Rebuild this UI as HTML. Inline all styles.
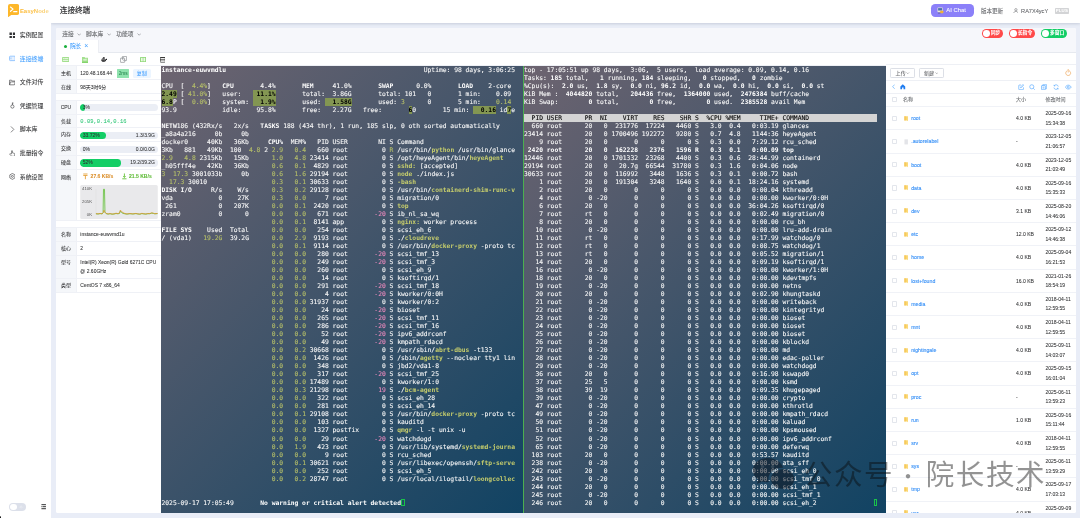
<!DOCTYPE html>
<html lang="zh-CN">
<head>
<meta charset="utf-8">
<title>EasyNode - 连接终端</title>
<style>
*{box-sizing:border-box;margin:0;padding:0}
html,body{width:1080px;height:518px;overflow:hidden}
body{position:relative;background:#e9edf7;font-family:"Liberation Sans","Noto Sans CJK SC",sans-serif;color:#303133;-webkit-font-smoothing:antialiased;-webkit-text-stroke:.06px}
.abs{position:absolute}
#wrap{position:absolute;left:0;top:0;width:1080px;height:518px;overflow:hidden;will-change:transform}
/* sidebar */
#side{position:absolute;left:0;top:0;width:51px;height:518px;background:#fff;z-index:3}
#logo{position:absolute;left:7.9px;top:3.9px;width:11.1px;height:13.3px}
#logot{position:absolute;left:19.900px;top:6.800px;font-size:6px;line-height:8px;font-weight:700;color:#fcc247;letter-spacing:-.02px;background:linear-gradient(90deg,#fcb322 0%,#fcc044 50%,#f8d88e 100%);-webkit-background-clip:text;background-clip:text;-webkit-text-fill-color:transparent;-webkit-text-stroke:0}
.mi{position:absolute;left:0;width:51.5px;height:12px;font-size:5.9px;line-height:12px;color:#303133}
.mi span{position:absolute;left:19.8px;top:0;white-space:nowrap}
.mi svg{position:absolute;left:8.6px;top:2.6px;width:6.8px;height:6.8px}
.mi.act{color:#409eff}
/* header */
#head{position:absolute;left:51px;top:0;width:1029px;height:23px;background:#fff;box-shadow:0 .8px 3px rgba(70,80,110,.27)}
#title{position:absolute;left:8.8px;top:5px;font-size:7.6px;line-height:11px;font-weight:500;color:#303133;white-space:nowrap}
#aichat{position:absolute;left:880.1px;top:3.9px;width:42.6px;height:13.1px;border-radius:4.2px;background:#8b80f9;color:#fff;font-size:5.9px;line-height:13.9px;white-space:nowrap}
#aichat span{position:absolute;left:15.2px;top:0}
#ver{position:absolute;left:930.1px;top:4.6px;font-size:5.5px;line-height:12px;color:#606266;white-space:nowrap}
#user{position:absolute;left:970.1px;top:4.6px;font-size:5.6px;line-height:12px;color:#606266;white-space:nowrap}
#plus{position:absolute;left:1003.7px;top:7.5px;width:14.4px;height:6.4px;background:#d3d4d6;border-radius:.8px;color:#fff;font-size:4.4px;line-height:6.4px;text-align:center;font-weight:700;letter-spacing:.1px}
/* panel */
#panel{position:absolute;left:56px;top:27.7px;width:1020px;height:485.3px;background:#fff;border-radius:2px;overflow:hidden}
#menurow{position:absolute;left:0;top:0;width:1020px;height:12.5px;background:#f6f7fb;font-size:5.75px;line-height:12.5px;color:#606266}
#menurow span{position:absolute;top:0;white-space:nowrap}
#tabrow{position:absolute;left:0;top:12.5px;width:1020px;height:12.7px;background:#f6f7fb;border-bottom:.5px solid #e6e9ef}
#tab{position:absolute;left:0;top:0;width:43px;height:12.7px;background:#fff;border-right:.5px solid #eceef3;font-size:5.7px;line-height:12.4px;color:#409eff}
#toolrow{position:absolute;left:0;top:24.9px;width:1020px;height:13.2px;background:#fff;border-bottom:.5px solid #eef0f5}
#toolrow svg{position:absolute}
.sw{position:absolute;top:1.6px;height:8.8px;border-radius:4.4px;color:#fff;font-size:4.8px;line-height:8.8px;font-weight:700;white-space:nowrap}
.sw i{position:absolute;left:1px;top:1px;width:6.8px;height:6.8px;border-radius:50%;background:#fff}
.sw span{position:absolute;left:8.6px;top:0}
/* info */
#info{position:absolute;left:0;top:37.8px;width:105px;height:447.5px;background:#fff;font-size:4.98px;color:#303133}
.ir{position:absolute;left:0;width:105px;border-top:.5px solid #eff1f6}
.ir .k{position:absolute;left:0;top:0;bottom:0;width:20.8px;background:#f5f7fa;border-right:.5px solid #eff1f6;text-align:center;color:#303133}
.ir .v{position:absolute;left:24.3px;top:0;white-space:nowrap}
.bar{position:absolute;left:24.2px;width:77.8px;height:7.4px;border-radius:3.7px;background:#ebeef5;overflow:hidden}
.bar b{position:absolute;left:0;top:0;height:100%;background:#13ce66;border-radius:3.7px}
.bar span{position:absolute;top:0;line-height:7.4px;font-size:5px;color:#303133;white-space:nowrap}
/* terminals */
.term{position:absolute;top:38.1px;height:447.2px;background:linear-gradient(135deg,#6d6470 0%,#114363 100%);overflow:hidden;
 font-family:"DejaVu Sans Mono","Liberation Mono",monospace;font-size:6.32px;color:#fafafa;-webkit-text-stroke:.09px}
.term .l{height:8.02px;line-height:8.8px;padding-left:.5px;white-space:pre;overflow:hidden}
.term.t2 .l{padding-left:0}
.term .o{color:#b7c069}
.term .ob{color:#c6cd6c;font-weight:700;-webkit-text-stroke:0}
.term .p{color:#f08cc0}
.term .b{font-weight:700;color:#fff;-webkit-text-stroke:0}
.term .h{background:#839652;color:#000;font-weight:700;-webkit-text-stroke:0;display:inline-block;height:8.02px;vertical-align:top}
.term .inv{background:#d4d4d4;color:#000;display:inline-block;height:8.02px;vertical-align:top}
.term .cur{display:inline-block;height:7.4px;width:3.8px;vertical-align:top;margin-top:.3px;border:.6px solid #19c24a}
/* file panel */
#files{position:absolute;left:830px;top:36.8px;width:190px;height:448.5px;background:#fff;border-top:1px solid #eef0f5;font-size:5.06px;color:#303133;overflow:hidden}
.fbtn{position:absolute;top:2.8px;height:9.5px;border:.5px solid #dcdfe6;border-radius:1.2px;background:#fff;font-size:5.06px;line-height:8.6px;color:#606266;text-align:center;white-space:nowrap}
.hl{position:absolute;left:0;width:190px;height:.5px;background:#eef0f5}
.cb{position:absolute;left:5.6px;top:8.6px;width:5.2px;height:5.2px;border:.5px solid #e3e6ec;border-radius:.9px;background:#fff}
.fr{position:absolute;left:0;width:190px;height:23.2px;border-top:.5px solid #f0f2f7}
.fr .fi{position:absolute;left:18px;top:8.3px;width:4.6px;height:5.8px}
.fr .fn{position:absolute;left:25.2px;top:0;line-height:23.4px;color:#3a92f7;font-size:5.2px;white-space:nowrap;-webkit-text-stroke:.12px #3a92f7}
.fr .fs{position:absolute;left:130px;top:0;line-height:23.4px;color:#303133;white-space:nowrap}
.fr .fd{position:absolute;left:159.4px;top:1.9px;line-height:9.6px;color:#303133;white-space:nowrap}
#wm{-webkit-text-stroke:0;position:absolute;left:0;top:453.4px;height:40px;width:1080px;font-size:28.6px;line-height:40px;color:rgba(10,10,10,.44);font-family:"Noto Sans CJK SC","Liberation Sans",sans-serif;letter-spacing:1.5px;z-index:5}
#wm span{position:absolute;top:0;white-space:nowrap}
</style>
</head>
<body>
<div id="wrap">

<!-- ============ sidebar ============ -->
<div id="side">
  <div id="logo"><svg viewBox="0 0 22.200 26.600" width="11.100" height="13.300" style="position:absolute;left:0;top:0"><path d="M4 0h14.200a4 4 0 0 1 4 4v13.800a4 4 0 0 1-4 4H6.500L0 26.600V4a4 4 0 0 1 4-4z" fill="#fdb72a"/><path d="M5 6l5.200 4.300L5 14.600" fill="none" stroke="#fff" stroke-width="2.300" stroke-linecap="round" stroke-linejoin="round"/><path d="M11.400 15.400h6.400" stroke="#fff" stroke-width="2.300" stroke-linecap="round"/></svg></div>
  <div id="logot">EasyNode</div>

  <div class="mi" style="top:29px"><svg viewBox="0 0 14 14"><path d="M1 1h5v5H1zM8 1h5v5H8zM1 8h5v5H1zM8 8h5v5H8z" fill="#303133"/></svg><span>实例配置</span></div>
  <div class="mi act" style="top:52.6px"><svg viewBox="0 0 14 14"><rect x="1" y="2.400" width="11.800" height="9.200" rx="1.800" fill="#e6f1ff" stroke="#5aa7ff" stroke-width="1.200"/><path d="M4 5.200v3.600" stroke="#5aa7ff" stroke-width="1.100"/></svg><span>连接终端</span></div>
  <div class="mi" style="top:76.2px"><svg viewBox="0 0 14 14"><path d="M1.2 12V2.4h4l1.4 1.8h6.2V6M1.2 12l1.8-6h10l-1.8 6z" fill="none" stroke="#303133" stroke-width="1.2" stroke-linejoin="round"/></svg><span>文件对传</span></div>
  <div class="mi" style="top:99.8px"><svg viewBox="0 0 14 14"><circle cx="7" cy="9.4" r="3.3" fill="none" stroke="#303133" stroke-width="1.2"/><path d="M7 6V1.2M7 2h2.2M7 4h1.6" stroke="#303133" stroke-width="1.2" fill="none"/></svg><span>凭据管理</span></div>
  <div class="mi" style="top:123.4px"><svg viewBox="0 0 14 14"><path d="M4.5 1.5l5.5 5.5-5.5 5.5" fill="none" stroke="#303133" stroke-width="1.2" stroke-linecap="round" stroke-linejoin="round"/></svg><span>脚本库</span></div>
  <div class="mi" style="top:147px"><svg viewBox="0 0 14 14"><path d="M5.2 8V2.2a1 1 0 0 1 2 0V6l3.6.8a1.4 1.4 0 0 1 1.1 1.6l-.6 3.4a1.4 1.4 0 0 1-1.4 1.1H6.2a2 2 0 0 1-1.5-.7L1.6 8.8c-.5-.7.4-1.6 1.2-1.1z" fill="none" stroke="#303133" stroke-width="1.1" stroke-linejoin="round"/></svg><span>批量指令</span></div>
  <div class="mi" style="top:170.6px"><svg viewBox="0 0 14 14"><path d="M7 .9l5.3 3v6.2L7 13.100 1.700 10.100V3.900z" fill="none" stroke="#303133" stroke-width="1.2" stroke-linejoin="round"/><circle cx="7" cy="7" r="2" fill="none" stroke="#303133" stroke-width="1.2"/></svg><span>系统设置</span></div>

  <div class="abs" style="left:9.1px;top:502.8px;width:17.2px;height:8.3px;border-radius:4.15px;background:#dce0ea"><div class="abs" style="left:.9px;top:.8px;width:6.7px;height:6.7px;border-radius:50%;background:#fff"></div><svg class="abs" style="left:10.200px;top:2px;width:4.300px;height:4.300px" viewBox="0 0 10 10"><circle cx="5" cy="5" r="2.200" fill="none" stroke="#eef0f6" stroke-width="1.300"/><path d="M5 0v1.500M5 8.500V10M0 5h1.500M8.500 5H10" stroke="#eef0f6" stroke-width="1"/></svg></div><div class="abs" style="left:-1.600px;top:516.400px;width:3px;height:3px;border-radius:50%;background:#111"></div>
  <svg class="abs" style="left:41px;top:504.2px;width:5.4px;height:5.4px" viewBox="0 0 12 12"><path d="M1 1.500h10M1 6h10M1 10.500h10" stroke="#303133" stroke-width="2.2"/><path d="M3.500 3.200v5.600" stroke="#fff" stroke-width="1"/></svg>
</div>

<!-- ============ header ============ -->
<div id="head">
  <div id="title">连接终端</div>
  <div id="aichat"><svg viewBox="0 0 14 14" style="position:absolute;left:6.3px;top:3.2px;width:6.8px;height:6.8px"><rect x="1" y="1" width="11" height="10" rx="1" fill="#e8e4d6"/><rect x="2.300" y="2.300" width="8.400" height="5" fill="#4a6fb0"/><rect x="6.500" y="7.500" width="6.500" height="5.500" rx="1" fill="#f0b23a"/><path d="M2 12.500h5" stroke="#555" stroke-width="1.200"/></svg><span>AI Chat</span></div>
  <div id="ver">版本更新</div>
  <div id="user"><svg viewBox="0 0 12 12" style="position:absolute;left:-8.600px;top:3px;width:5.800px;height:5.800px"><circle cx="6" cy="3.600" r="2.400" fill="none" stroke="#606266" stroke-width="1.100"/><path d="M1.300 11.300c.3-3 2.300-4.300 4.700-4.300s4.400 1.300 4.700 4.300" fill="none" stroke="#606266" stroke-width="1.100"/></svg>RA7X4ycY</div>
  <div id="plus">PLUS</div>
</div>

<!-- ============ main panel ============ -->
<div id="panel">
  <div id="menurow">
    <span style="left:6.3px">连接</span><svg class="abs" style="left:20.700px;top:5px;width:4.400px;height:3px" viewBox="0 0 9 6"><path d="M1 1l3.500 3.500L8 1" fill="none" stroke="#606266" stroke-width="1"/></svg>
    <span style="left:30.100px">脚本库</span><svg class="abs" style="left:50.700px;top:5px;width:4.400px;height:3px" viewBox="0 0 9 6"><path d="M1 1l3.500 3.500L8 1" fill="none" stroke="#606266" stroke-width="1"/></svg>
    <span style="left:60.200px">功能项</span><svg class="abs" style="left:80.700px;top:5px;width:4.400px;height:3px" viewBox="0 0 9 6"><path d="M1 1l3.500 3.500L8 1" fill="none" stroke="#606266" stroke-width="1"/></svg>
    <div class="sw" style="left:926.200px;width:20.600px;background:#ff4949"><i></i><span>同步</span></div>
    <div class="sw" style="left:953.200px;width:26px;background:#ff4949"><i></i><span>长指令</span></div>
    <div class="sw" style="left:985.300px;width:26px;background:#13ce66"><i></i><span>多窗口</span></div>
  </div>
  <div id="tabrow">
    <div id="tab"><i class="abs" style="left:8.100px;top:4.600px;width:3.300px;height:3.300px;border-radius:50%;background:#1aaf3c"></i><span class="abs" style="left:13.900px;top:0;white-space:nowrap">院长</span><span class="abs" style="left:28.300px;top:-.3px;font-size:7px;color:#409eff;-webkit-text-stroke:0">×</span></div>
  </div>
  <div id="toolrow">
    <svg style="left:5.900px;top:4.300px;width:7.100px;height:5px" viewBox="0 0 7.100 5"><rect x="0" y="0" width="7.100" height="5" rx=".8" fill="#a4e08f"/><path d="M1.300 1.600h.7M2.900 1.600h3M1.300 3.400h4.600" stroke="#fff" stroke-width=".75" stroke-linecap="round"/></svg>
    <svg style="left:25.900px;top:4.400px;width:6px;height:5.750px" viewBox="0 0 6 5.750"><path d="M0 0h2.600l.5.800H6V5.750H0z" fill="#a4e08f"/><path d="M0 5.300h6" stroke="#6fcf55" stroke-width=".9"/><path d="M1.300 2.900h3.400" stroke="#fff" stroke-width=".9"/><path d="M3.400 1.900h1.200" stroke="#e8f8e2" stroke-width=".5"/></svg>
    <svg style="left:45px;top:4.200px;width:6.400px;height:5px" viewBox="0 0 12.800 10"><path d="M.3 5.200h8.900c.5-1.700 1.600-2.200 2.900-1.500.4.200.5.500.3.900-.4.900-1 1.400-2 1.500C9.700 8.600 7.700 9.800 5 9.800 2.200 9.800.5 8.300.3 5.200z" fill="#1d1d1f"/><path d="M1.800 2.800h5.800v1.900H1.800zM3.800.7h3.600v1.700H3.800z" fill="#1d1d1f"/><path d="M3 7.400c1.400.9 3.300.9 4.700 0" stroke="#fff" stroke-width=".8" fill="none"/></svg>
    <svg style="left:64px;top:3.400px;width:7px;height:6.750px" viewBox="0 0 14 13.500"><rect x="4.600" y=".8" width="8.600" height="8.400" rx="1" fill="#fff" stroke="#6b6e73" stroke-width="1.100"/><rect x=".8" y="4.300" width="8.600" height="8.400" rx="1" fill="#fff" stroke="#6b6e73" stroke-width="1.100"/><path d="M7.800 3.400A2.600 2.600 0 1 0 9.400 7.400" fill="none" stroke="#6b6e73" stroke-width="1"/></svg>
    <svg style="left:83.900px;top:4.300px;width:6.100px;height:5.100px" viewBox="0 0 6.100 5.100"><rect x="0" y="0" width="6.100" height="5.100" rx=".4" fill="#8fd878"/><rect x=".9" y=".8" width="1.800" height="3.500" fill="#eaf8e4"/><rect x="3.400" y=".8" width="1.800" height="3.500" fill="#eaf8e4"/></svg>
    <svg style="left:103.900px;top:4.300px;width:5.600px;height:5.700px" viewBox="0 0 5.600 5.700"><rect x=".35" y=".35" width="4.900" height="5" rx=".7" fill="#fff" stroke="#444" stroke-width=".7"/><path d="M.3 .6h5M.1 2.850h5.400" stroke="#222" stroke-width=".9"/><path d="M.5 5.300h4.600" stroke="#999" stroke-width=".6"/></svg>
  </div>

  <!-- info column -->
  <div id="info">
    <div class="ir" style="top:0;height:13.900px;line-height:14.700px"><div class="k">主机</div><div class="v">120.48.168.44</div>
      <div class="abs" style="left:61px;top:2.300px;width:12.200px;height:9.500px;background:#8fe2ae;border-radius:.6px;color:#2c8a55;text-align:center;line-height:9.500px;font-size:4.700px">2ms</div>
      <div class="abs" style="left:77px;top:3px;width:17.600px;height:8.200px;background:#ecf5ff;border-radius:1.600px;color:#409eff;text-align:center;line-height:8.200px;font-size:5px">复制</div></div>
    <div class="ir" style="top:13.900px;height:14.400px;line-height:14.700px;border-bottom:.5px solid #eff1f6"><div class="k">在线</div><div class="v">98天3时6分</div></div>

    <div class="ir" style="top:34.400px;height:13.700px;line-height:13.700px"><div class="k">CPU</div><div class="bar" style="top:3.200px"><b style="width:4.400px"></b><span style="left:2.600px">3%</span></div></div>
    <div class="ir" style="top:48.100px;height:13.900px;line-height:13.900px"><div class="k">负载</div><div class="v" style="font-family:'Liberation Mono','DejaVu Sans Mono',monospace;color:#33c779;font-size:5.500px">0.09,0.14,0.16</div></div>
    <div class="ir" style="top:62px;height:13.800px;line-height:13.800px"><div class="k">内存</div><div class="bar" style="top:3.300px"><b style="width:26.300px"></b><span style="left:2.600px">33.72%</span><span style="right:3px">1.3/3.9G</span></div></div>
    <div class="ir" style="top:75.800px;height:13.800px;line-height:13.800px"><div class="k">交换</div><div class="bar" style="top:3.300px"><span style="left:2.600px">0%</span><span style="right:3px">0.0/0.0G</span></div></div>
    <div class="ir" style="top:89.600px;height:13.800px;line-height:13.800px"><div class="k">硬盘</div><div class="bar" style="top:3.300px"><b style="width:40.500px"></b><span style="left:2.600px">52%</span><span style="right:3px">19.2/39.2G</span></div></div>
    <div class="ir" style="top:103.400px;height:51.800px;line-height:14.400px;border-bottom:.5px solid #eff1f6"><div class="k" style="line-height:14.400px">网络</div>
      <svg class="abs" style="left:27.200px;top:3.400px;width:4.800px;height:6.800px" viewBox="0 0 9 11"><path d="M.5 1h8M.5 3.800h8M4.500 3.800v7" stroke="#e6a23c" stroke-width="1.700" fill="none"/></svg>
      <span class="abs" style="left:34.600px;top:-.5px;color:#db8f2c;font-size:5.050px;font-weight:700;white-space:nowrap">27.6 KB/s</span>
      <svg class="abs" style="left:65.800px;top:3.400px;width:4.800px;height:6.800px" viewBox="0 0 9 11"><path d="M4.500 0v7M2.300 5l2.200 2.600L6.700 5M.5 10h8" stroke="#67c23a" stroke-width="1.700" fill="none"/></svg>
      <span class="abs" style="left:73.000px;top:-.5px;color:#5cba33;font-size:5.050px;font-weight:700;white-space:nowrap">21.5 KB/s</span>
      <svg class="abs" style="left:24px;top:14.900px;width:78px;height:34.000px" viewBox="0 0 78 34.200">
        <rect x="0" y="0" width="78" height="34.200" rx="1.600" fill="#e9e9eb"/>
        <text x="11.900" y="5.400" font-size="4.300" fill="#555" text-anchor="end" font-family="Liberation Sans,sans-serif">410K</text>
        <text x="11.900" y="18.500" font-size="4.300" fill="#555" text-anchor="end" font-family="Liberation Sans,sans-serif">205K</text>
        <text x="11.900" y="31.300" font-size="4.300" fill="#555" text-anchor="end" font-family="Liberation Sans,sans-serif">0K</text>
        <path d="M15.800 4v25.600" stroke="#dcdcdc" stroke-width=".4"/>
        <polyline fill="none" stroke="#5fbf32" stroke-width=".8" points="15.800,29 18,29.200 20,28.800 22,29.100 23,28 23.400,4.300 24.400,4.300 24.900,27.500 26,28.800 28,29.300 30,28.900 32,29.400 34,29.200 36,28.700 38,29 39.500,28.600 40.300,26.400 41.500,27.600 43,28.600 45,29 47,29.300 50,28.900 53,29.200 56,28.800 58,29.200 60,29.400 62,28.800 64,29.100 66,29.300 68,28.900 70,28.900 72,28.300 73.500,28.600 75,29 77.800,28.800"/>
        <polyline fill="none" stroke="#d9962e" stroke-width=".8" points="15.800,28.800 18,29 20,28.600 22,28.900 23.200,27.600 23.900,25.400 24.600,27 26,28.500 28,29.100 30,28.700 32,29.200 34,29 36,28.400 38,28.800 39.600,28 40.300,25.300 41.200,26.300 43,27.800 45,28.700 47,29.100 50,28.700 53,29 56,28.600 58,29 60,29.200 62,28.500 64,28.900 66,29.100 68,28.700 70,28.700 72,28 73.500,28.400 75,28.800 77.800,28.600"/>
      </svg>
    </div>

    <div class="ir" style="top:161.900px;height:14px;line-height:12.200px"><div class="k">名称</div><div class="v">instance-euwvmd1u</div></div>
    <div class="ir" style="top:175.900px;height:13.800px;line-height:13.200px"><div class="k">核心</div><div class="v">2</div></div>
    <div class="ir" style="top:189.700px;height:23.300px;line-height:9.600px"><div class="k" style="line-height:13.000px">型号</div><div class="v" style="top:1.600px">Intel(R) Xeon(R) Gold 6271C CPU<br>@ 2.60GHz</div></div>
    <div class="ir" style="top:213px;height:14.200px;line-height:12.800px;border-bottom:.5px solid #eff1f6"><div class="k">类型</div><div class="v">CentOS 7 x86_64</div></div>
  </div>

  <!-- terminals -->
  <div class="term" style="left:105px;width:362.400px">
<div class="l"><span class="b">instance-euwvmdlu</span>                                                    Uptime: 98 days, 3:06:25</div>
<div class="l"></div>
<div class="l">CPU  [  <span class="o">4.4%</span>]   <span class="b">CPU</span>       4.4%       <span class="b">MEM</span>     41.0%       <span class="b">SWAP</span>      0.0%       <span class="b">LOAD</span>    2-core </div>
<div class="l"><span class="h">2.49</span> [ <span class="o">41.0%</span>]   user:   <span class="h"> 11.1%</span>       total:  3.86G       total: 101   0       1 min:    0.09 </div>
<div class="l"><span class="h">6.8</span>P [  <span class="o">0.0%</span>]   system: <span class="h">  1.9%</span>       used: <span class="h">  1.58G</span>       used: <span class="o">3</span>      0       5 min:    <span class="o">0.14</span></div>
<div class="l">93.9            idle:    95.8%       free:   2.27G   free:       <span class="h">6</span>0       15 min: <span class="h">  0.16</span> id<span class="h">7</span>e</div>
<div class="l"></div>
<div class="l"><span class="b">NETW</span>186 (432Rx/s   2x/s   <span class="b">TASKS</span> 188 (434 thr), 1 run, 185 slp, 0 oth sorted automatically    </div>
<div class="l">_a8a4a216     0b     0b                                                                      </div>
<div class="l">docker0     40Kb   36Kb     <span class="b">CPU%</span>  MEM%   PID USER        NI S Command                        </div>
<div class="l">3Kb   881   49Kb  100  <span class="o">4.8</span> 2 <span class="o">2.9</span>   <span class="o">0.4</span>   660 root         0 <span class="o">R</span> /usr/bin/<span class="ob">python</span> /usr/bin/glance</div>
<div class="l"><span class="o">2.9</span>   <span class="o">4.8</span> 2315Kb   15Kb      <span class="o">1.0</span>   <span class="o">4.8</span> 23414 root         0 S /opt/heyeAgent/bin/<span class="ob">heyeAgent</span></div>
<div class="l">_h05fff4e   42Kb   36Kb      <span class="o">0.6</span>   <span class="o">0.1</span>  4829 root         0 S <span class="ob">sshd:</span> [accepted]               </div>
<div class="l"><span class="o">3</span>  <span class="o">17.3</span> 3001033b     0b      <span class="o">0.6</span>   <span class="o">1.6</span> 29194 root         0 S <span class="ob">node</span> ./index.js                </div>
<div class="l">  <span class="o">17.3</span> 30010                 <span class="o">0.3</span>   <span class="o">0.1</span> 30633 root         0 S <span class="ob">-bash</span></div>
<div class="l"><span class="b">DISK I/O</span>     R/s    W/s      <span class="o">0.3</span>   <span class="o">0.2</span> 29128 root         0 S /usr/bin/<span class="ob">containerd-shim-runc-v</span></div>
<div class="l">vda            0    27K      <span class="o">0.3</span>   <span class="o">0.0</span>     7 root         0 S migration/0                    </div>
<div class="l"> 261           0   207K      <span class="o">0.0</span>   <span class="o">0.1</span>  2420 root         0 S <span class="ob">top</span></div>
<div class="l">zram0          0      0      <span class="o">0.0</span>   <span class="o">0.0</span>   671 root       <span class="p">-20</span> S ib_nl_sa_wq                    </div>
<div class="l">                             <span class="o">0.0</span>   <span class="o">0.1</span>  8141 app          0 S <span class="ob">nginx:</span> worker process          </div>
<div class="l"><span class="b">FILE SYS</span>    Used  Total      <span class="o">0.0</span>   <span class="o">0.0</span>   254 root         0 S scsi_eh_6                      </div>
<div class="l">/ (vda1)   <span class="o">19.2G</span>  39.2G      <span class="o">0.0</span>   <span class="o">2.9</span>  9193 root         0 S ./<span class="ob">cloudreve</span></div>
<div class="l">                             <span class="o">0.0</span>   <span class="o">0.1</span>  9114 root         0 S /usr/bin/<span class="ob">docker-proxy</span> -proto tc</div>
<div class="l">                             <span class="o">0.0</span>   <span class="o">0.0</span>   280 root       <span class="p">-20</span> S scsi_tmf_13                    </div>
<div class="l">                             <span class="o">0.0</span>   <span class="o">0.0</span>   249 root       <span class="p">-20</span> S scsi_tmf_3                     </div>
<div class="l">                             <span class="o">0.0</span>   <span class="o">0.0</span>   260 root         0 S scsi_eh_9                      </div>
<div class="l">                             <span class="o">0.0</span>   <span class="o">0.0</span>    14 root         0 S ksoftirqd/1                    </div>
<div class="l">                             <span class="o">0.0</span>   <span class="o">0.0</span>   291 root       <span class="p">-20</span> S scsi_tmf_18                    </div>
<div class="l">                             <span class="o">0.0</span>   <span class="o">0.0</span>     4 root       <span class="p">-20</span> S kworker/0:0H                   </div>
<div class="l">                             <span class="o">0.0</span>   <span class="o">0.0</span> 31937 root         0 S kworker/0:2                    </div>
<div class="l">                             <span class="o">0.0</span>   <span class="o">0.0</span>    24 root       <span class="p">-20</span> S bioset                         </div>
<div class="l">                             <span class="o">0.0</span>   <span class="o">0.0</span>   265 root       <span class="p">-20</span> S scsi_tmf_11                    </div>
<div class="l">                             <span class="o">0.0</span>   <span class="o">0.0</span>   286 root       <span class="p">-20</span> S scsi_tmf_16                    </div>
<div class="l">                             <span class="o">0.0</span>   <span class="o">0.0</span>    52 root       <span class="p">-20</span> S ipv6_addrconf                  </div>
<div class="l">                             <span class="o">0.0</span>   <span class="o">0.0</span>    49 root       <span class="p">-20</span> S kmpath_rdacd                   </div>
<div class="l">                             <span class="o">0.0</span>   <span class="o">0.2</span> 30668 root         0 S /usr/sbin/<span class="ob">abrt-dbus</span> -t133      </div>
<div class="l">                             <span class="o">0.0</span>   <span class="o">0.0</span>  1426 root         0 S /sbin/<span class="ob">agetty</span> --noclear tty1 lin</div>
<div class="l">                             <span class="o">0.0</span>   <span class="o">0.0</span>   348 root         0 S jbd2/vda1-8                    </div>
<div class="l">                             <span class="o">0.0</span>   <span class="o">0.0</span>   317 root       <span class="p">-20</span> S scsi_tmf_25                    </div>
<div class="l">                             <span class="o">0.0</span>   <span class="o">0.0</span> 17489 root         0 S kworker/1:0                    </div>
<div class="l">                             <span class="o">0.0</span>   <span class="o">0.3</span> 21298 root        <span class="p">19</span> S ./<span class="ob">bcm-agent</span></div>
<div class="l">                             <span class="o">0.0</span>   <span class="o">0.0</span>   322 root         0 S scsi_eh_28                     </div>
<div class="l">                             <span class="o">0.0</span>   <span class="o">0.0</span>   281 root         0 S scsi_eh_14                     </div>
<div class="l">                             <span class="o">0.0</span>   <span class="o">0.1</span> 29108 root         0 S /usr/bin/<span class="ob">docker-proxy</span> -proto tc</div>
<div class="l">                             <span class="o">0.0</span>   <span class="o">0.0</span>   103 root         0 S kauditd                        </div>
<div class="l">                             <span class="o">0.0</span>   <span class="o">0.0</span>  1327 postfix      0 S <span class="ob">qmgr</span> -l -t unix -u             </div>
<div class="l">                             <span class="o">0.0</span>   <span class="o">0.0</span>    29 root       <span class="p">-20</span> S watchdogd                      </div>
<div class="l">                             <span class="o">0.0</span>   <span class="o">1.9</span>   423 root         0 S /usr/lib/systemd/<span class="ob">systemd-journa</span></div>
<div class="l">                             <span class="o">0.0</span>   <span class="o">0.0</span>     9 root         0 S rcu_sched                      </div>
<div class="l">                             <span class="o">0.0</span>   <span class="o">0.1</span> 30621 root         0 S /usr/libexec/openssh/<span class="ob">sftp-serve</span></div>
<div class="l">                             <span class="o">0.0</span>   <span class="o">0.0</span>   252 root         0 S scsi_eh_5                      </div>
<div class="l">                             <span class="o">0.0</span>   <span class="o">0.2</span> 28747 root         0 S /usr/local/ilogtail/<span class="ob">loongcollec</span></div>
<div class="l"></div>
<div class="l"></div>
<div class="l">2025-09-17 17:05:49       <span class="b">No warning or critical alert detected</span><span class="cur"> </span></div>
  </div>
  <div class="abs" style="left:467.200px;top:38.100px;width:.9px;height:447.200px;background:#4caf50"></div>
  <div class="term t2" style="left:468px;width:361.700px">
<div class="l">top - 17:05:51 up 98 days,  3:06,  5 users,  load average: 0.09, 0.14, 0.16</div>
<div class="l">Tasks: <span class="b">185</span> total, <span class="b">  1</span> running, <span class="b">184</span> sleeping, <span class="b">  0</span> stopped, <span class="b">  0</span> zombie</div>
<div class="l">%Cpu(s): <span class="b"> 2.0</span> us, <span class="b"> 1.8</span> sy, <span class="b"> 0.0</span> ni, <span class="b">96.2</span> id, <span class="b"> 0.0</span> wa, <span class="b"> 0.0</span> hi, <span class="b"> 0.0</span> si, <span class="b"> 0.0</span> st</div>
<div class="l">KiB Mem :  <span class="b">4044820</span> total,   <span class="b">204436</span> free,  <span class="b">1364000</span> used,  <span class="b">2476384</span> buff/cache</div>
<div class="l">KiB Swap: <span class="b">       0</span> total, <span class="b">       0</span> free, <span class="b">       0</span> used.  <span class="b">2385528</span> avail Mem</div>
<div class="l"></div>
<div class="l"><span class="inv">  PID USER      PR  NI    VIRT    RES    SHR S  %CPU %MEM     TIME+ COMMAND                  </span></div>
<div class="l">  660 root      20   0  231776  17224   4460 S   3.0  0.4   0:03.19 glances</div>
<div class="l">23414 root      20   0 1700496 192272   9280 S   0.7  4.8   1144:36 heyeAgent</div>
<div class="l">    9 root      20   0       0      0      0 S   0.3  0.0   7:29.12 rcu_sched</div>
<div class="l"><span class="b"> 2420 root      20   0  162228   2376   1596 R   0.3  0.1   0:00.09 top</span></div>
<div class="l">12446 root      20   0 1701332  23268   4400 S   0.3  0.6  28:44.99 containerd</div>
<div class="l">29194 root      20   0   20.7g  66544  31780 S   0.3  1.6   0:04.06 node</div>
<div class="l">30633 root      20   0  116992   3448   1636 S   0.3  0.1   0:00.72 bash</div>
<div class="l">    1 root      20   0  191304   3248   1640 S   0.0  0.1  18:24.16 systemd</div>
<div class="l">    2 root      20   0       0      0      0 S   0.0  0.0   0:00.04 kthreadd</div>
<div class="l">    4 root       0 -20       0      0      0 S   0.0  0.0   0:00.00 kworker/0:0H</div>
<div class="l">    6 root      20   0       0      0      0 S   0.0  0.0  36:04.26 ksoftirqd/0</div>
<div class="l">    7 root      rt   0       0      0      0 S   0.0  0.0   0:02.49 migration/0</div>
<div class="l">    8 root      20   0       0      0      0 S   0.0  0.0   0:00.00 rcu_bh</div>
<div class="l">   10 root       0 -20       0      0      0 S   0.0  0.0   0:00.00 lru-add-drain</div>
<div class="l">   11 root      rt   0       0      0      0 S   0.0  0.0   0:17.99 watchdog/0</div>
<div class="l">   12 root      rt   0       0      0      0 S   0.0  0.0   0:08.75 watchdog/1</div>
<div class="l">   13 root      rt   0       0      0      0 S   0.0  0.0   0:05.52 migration/1</div>
<div class="l">   14 root      20   0       0      0      0 S   0.0  0.0   0:09.19 ksoftirqd/1</div>
<div class="l">   16 root       0 -20       0      0      0 S   0.0  0.0   0:00.00 kworker/1:0H</div>
<div class="l">   18 root      20   0       0      0      0 S   0.0  0.0   0:00.00 kdevtmpfs</div>
<div class="l">   19 root       0 -20       0      0      0 S   0.0  0.0   0:00.00 netns</div>
<div class="l">   20 root      20   0       0      0      0 S   0.0  0.0   0:02.90 khungtaskd</div>
<div class="l">   21 root       0 -20       0      0      0 S   0.0  0.0   0:00.00 writeback</div>
<div class="l">   22 root       0 -20       0      0      0 S   0.0  0.0   0:00.00 kintegrityd</div>
<div class="l">   23 root       0 -20       0      0      0 S   0.0  0.0   0:00.00 bioset</div>
<div class="l">   24 root       0 -20       0      0      0 S   0.0  0.0   0:00.00 bioset</div>
<div class="l">   25 root       0 -20       0      0      0 S   0.0  0.0   0:00.00 bioset</div>
<div class="l">   26 root       0 -20       0      0      0 S   0.0  0.0   0:00.00 kblockd</div>
<div class="l">   27 root       0 -20       0      0      0 S   0.0  0.0   0:00.00 md</div>
<div class="l">   28 root       0 -20       0      0      0 S   0.0  0.0   0:00.00 edac-poller</div>
<div class="l">   29 root       0 -20       0      0      0 S   0.0  0.0   0:00.00 watchdogd</div>
<div class="l">   36 root      20   0       0      0      0 S   0.0  0.0   0:16.98 kswapd0</div>
<div class="l">   37 root      25   5       0      0      0 S   0.0  0.0   0:00.00 ksmd</div>
<div class="l">   38 root      39  19       0      0      0 S   0.0  0.0   0:09.35 khugepaged</div>
<div class="l">   39 root       0 -20       0      0      0 S   0.0  0.0   0:00.00 crypto</div>
<div class="l">   47 root       0 -20       0      0      0 S   0.0  0.0   0:00.00 kthrotld</div>
<div class="l">   49 root       0 -20       0      0      0 S   0.0  0.0   0:00.00 kmpath_rdacd</div>
<div class="l">   50 root       0 -20       0      0      0 S   0.0  0.0   0:00.00 kaluad</div>
<div class="l">   51 root       0 -20       0      0      0 S   0.0  0.0   0:00.00 kpsmoused</div>
<div class="l">   52 root       0 -20       0      0      0 S   0.0  0.0   0:00.00 ipv6_addrconf</div>
<div class="l">   65 root       0 -20       0      0      0 S   0.0  0.0   0:00.00 deferwq</div>
<div class="l">  103 root      20   0       0      0      0 S   0.0  0.0   0:53.57 kauditd</div>
<div class="l">  238 root       0 -20       0      0      0 S   0.0  0.0   0:00.00 ata_sff</div>
<div class="l">  242 root      20   0       0      0      0 S   0.0  0.0   0:00.00 scsi_eh_0</div>
<div class="l">  243 root       0 -20       0      0      0 S   0.0  0.0   0:00.00 scsi_tmf_0</div>
<div class="l">  244 root      20   0       0      0      0 S   0.0  0.0   0:00.00 scsi_eh_1</div>
<div class="l">  245 root       0 -20       0      0      0 S   0.0  0.0   0:00.00 scsi_tmf_1</div>
<div class="l">  246 root      20   0       0      0      0 S   0.0  0.0   0:00.00 scsi_eh_2               <span class="cur"> </span></div>
  </div>

  <!-- file panel -->
  <div id="files">
    <div class="fbtn" style="left:4.200px;width:25px">上传<svg style="display:inline-block;width:3.600px;height:2.400px;margin-left:.5px;vertical-align:.6px" viewBox="0 0 9 6"><path d="M1 1l3.500 3.500L8 1" fill="none" stroke="#606266" stroke-width="1"/></svg></div>
    <div class="fbtn" style="left:32.500px;width:25.200px">新建<svg style="display:inline-block;width:3.600px;height:2.400px;margin-left:.5px;vertical-align:.6px" viewBox="0 0 9 6"><path d="M1 1l3.500 3.500L8 1" fill="none" stroke="#606266" stroke-width="1"/></svg></div>
    <svg class="abs" style="left:179.200px;top:3.800px;width:6.400px;height:6.600px" viewBox="0 0 12.800 13.200"><path d="M4 3.600A5 5 0 1 0 8.800 3.600" fill="none" stroke="#eea65a" stroke-width="1.400" stroke-linecap="round"/><path d="M6.400 .8v5.400" stroke="#eea65a" stroke-width="1.400" stroke-linecap="round"/></svg>
    <div class="hl" style="top:14.800px"></div>
    <svg class="abs" style="left:5.600px;top:19.000px;width:3.200px;height:5.400px" viewBox="0 0 6 10"><path d="M5 1L1.200 5 5 9" fill="none" stroke="#409eff" stroke-width="1.100"/></svg>
    <svg class="abs" style="left:14.300px;top:18.900px;width:5.600px;height:5.600px" viewBox="0 0 12 12"><path d="M6 .8L.8 5.600V11.200h3.700V7.600h3v3.600h3.700V5.600z" fill="#1f7cf0"/></svg>
    <svg class="abs" style="left:131.800px;top:18.700px;width:6.200px;height:6.200px" viewBox="0 0 12 12"><path d="M10.500 6.500v3.500a1 1 0 0 1-1 1h-7a1 1 0 0 1-1-1v-7a1 1 0 0 1 1-1H6" fill="none" stroke="#409eff" stroke-width="1.100"/><path d="M5 7.200l.3-1.800L10 .8l1.300 1.300L6.700 6.800z" fill="none" stroke="#409eff" stroke-width="1"/></svg>
    <svg class="abs" style="left:143.300px;top:18.700px;width:6.200px;height:6.200px" viewBox="0 0 12 12"><circle cx="5.400" cy="5.400" r="4" fill="none" stroke="#409eff" stroke-width="1.100"/><path d="M8.400 8.400l2.800 2.800" stroke="#409eff" stroke-width="1.100"/></svg>
    <svg class="abs" style="left:155.300px;top:18.700px;width:6.200px;height:6.200px" viewBox="0 0 12 12"><rect x="1" y="3" width="7.500" height="8" rx=".8" fill="none" stroke="#409eff" stroke-width="1.100"/><path d="M3.500 3V1.200h7.300v8H8.600M3 6h3.500M3 8h3.500" fill="none" stroke="#409eff" stroke-width="1"/></svg>
    <svg class="abs" style="left:167.200px;top:18.700px;width:6.200px;height:6.200px" viewBox="0 0 12 12"><path d="M10.300 5A4.400 4.400 0 0 0 2.300 3.600M1.700 7A4.400 4.400 0 0 0 9.700 8.400" fill="none" stroke="#409eff" stroke-width="1.100"/><path d="M2 1.500v2.300h2.300M10 10.500V8.200H7.700" fill="none" stroke="#409eff" stroke-width="1"/></svg>
    <svg class="abs" style="left:179.000px;top:18.700px;width:6.600px;height:6.200px" viewBox="0 0 13 12"><path d="M.8 6C2.300 3.300 4.200 2.200 6.500 2.200S10.700 3.300 12.200 6C10.700 8.700 8.800 9.800 6.500 9.800S2.300 8.700.8 6z" fill="none" stroke="#409eff" stroke-width="1.100"/><circle cx="6.500" cy="6" r="1.900" fill="none" stroke="#409eff" stroke-width="1.100"/></svg>
    <div class="hl" style="top:27.600px"></div>
    <span class="cb" style="top:31.600px"></span>
    <span class="abs" style="left:17px;top:27.900px;line-height:13px;color:#5f6266;white-space:nowrap">名称</span>
    <span class="abs" style="left:130px;top:27.900px;line-height:13px;color:#5f6266;white-space:nowrap">大小</span>
    <span class="abs" style="left:159.400px;top:27.900px;line-height:13px;color:#5f6266;white-space:nowrap">修改时间</span>
<div class="fr" style="top:40.80px"><span class="cb"></span><svg class="fi" viewBox="0 0 10 12"><path d="M1 0.5h7.5v10.5l-2-1.6H1z" fill="#fad56e"/><path d="M1 0.5h2.2v9H1z" fill="#f2be48"/></svg><span class="fn">root</span><span class="fs">4.0 KB</span><span class="fd">2025-09-16<br>15:34:38</span></div>
<div class="fr" style="top:64.00px"><span class="cb"></span><svg class="fi" viewBox="0 0 10 12"><rect x="1" y="0.5" width="7.5" height="11" fill="#e3e4e8"/></svg><span class="fn">.autorelabel</span><span class="fs">-</span><span class="fd">2023-12-05<br>21:06:57</span></div>
<div class="fr" style="top:87.20px"><span class="cb"></span><svg class="fi" viewBox="0 0 10 12"><path d="M1 0.5h7.5v10.5l-2-1.6H1z" fill="#fad56e"/><path d="M1 0.5h2.2v9H1z" fill="#f2be48"/></svg><span class="fn">boot</span><span class="fs">4.0 KB</span><span class="fd">2023-12-05<br>21:03:49</span></div>
<div class="fr" style="top:110.40px"><span class="cb"></span><svg class="fi" viewBox="0 0 10 12"><path d="M1 0.5h7.5v10.5l-2-1.6H1z" fill="#fad56e"/><path d="M1 0.5h2.2v9H1z" fill="#f2be48"/></svg><span class="fn">data</span><span class="fs">4.0 KB</span><span class="fd">2025-09-16<br>15:35:33</span></div>
<div class="fr" style="top:133.60px"><span class="cb"></span><svg class="fi" viewBox="0 0 10 12"><path d="M1 0.5h7.5v10.5l-2-1.6H1z" fill="#fad56e"/><path d="M1 0.5h2.2v9H1z" fill="#f2be48"/></svg><span class="fn">dev</span><span class="fs">3.1 KB</span><span class="fd">2025-08-20<br>14:46:06</span></div>
<div class="fr" style="top:156.80px"><span class="cb"></span><svg class="fi" viewBox="0 0 10 12"><path d="M1 0.5h7.5v10.5l-2-1.6H1z" fill="#fad56e"/><path d="M1 0.5h2.2v9H1z" fill="#f2be48"/></svg><span class="fn">etc</span><span class="fs">12.0 KB</span><span class="fd">2025-09-12<br>14:46:38</span></div>
<div class="fr" style="top:180.00px"><span class="cb"></span><svg class="fi" viewBox="0 0 10 12"><path d="M1 0.5h7.5v10.5l-2-1.6H1z" fill="#fad56e"/><path d="M1 0.5h2.2v9H1z" fill="#f2be48"/></svg><span class="fn">home</span><span class="fs">4.0 KB</span><span class="fd">2025-09-04<br>16:21:53</span></div>
<div class="fr" style="top:203.20px"><span class="cb"></span><svg class="fi" viewBox="0 0 10 12"><path d="M1 0.5h7.5v10.5l-2-1.6H1z" fill="#fad56e"/><path d="M1 0.5h2.2v9H1z" fill="#f2be48"/></svg><span class="fn">lost+found</span><span class="fs">16.0 KB</span><span class="fd">2021-01-26<br>18:54:19</span></div>
<div class="fr" style="top:226.40px"><span class="cb"></span><svg class="fi" viewBox="0 0 10 12"><path d="M1 0.5h7.5v10.5l-2-1.6H1z" fill="#fad56e"/><path d="M1 0.5h2.2v9H1z" fill="#f2be48"/></svg><span class="fn">media</span><span class="fs">4.0 KB</span><span class="fd">2018-04-11<br>12:59:55</span></div>
<div class="fr" style="top:249.60px"><span class="cb"></span><svg class="fi" viewBox="0 0 10 12"><path d="M1 0.5h7.5v10.5l-2-1.6H1z" fill="#fad56e"/><path d="M1 0.5h2.2v9H1z" fill="#f2be48"/></svg><span class="fn">mnt</span><span class="fs">4.0 KB</span><span class="fd">2018-04-11<br>12:59:55</span></div>
<div class="fr" style="top:272.80px"><span class="cb"></span><svg class="fi" viewBox="0 0 10 12"><path d="M1 0.5h7.5v10.5l-2-1.6H1z" fill="#fad56e"/><path d="M1 0.5h2.2v9H1z" fill="#f2be48"/></svg><span class="fn">nightingale</span><span class="fs">4.0 KB</span><span class="fd">2025-09-11<br>14:03:07</span></div>
<div class="fr" style="top:296.00px"><span class="cb"></span><svg class="fi" viewBox="0 0 10 12"><path d="M1 0.5h7.5v10.5l-2-1.6H1z" fill="#fad56e"/><path d="M1 0.5h2.2v9H1z" fill="#f2be48"/></svg><span class="fn">opt</span><span class="fs">4.0 KB</span><span class="fd">2025-09-15<br>16:01:04</span></div>
<div class="fr" style="top:319.20px"><span class="cb"></span><svg class="fi" viewBox="0 0 10 12"><path d="M1 0.5h7.5v10.5l-2-1.6H1z" fill="#fad56e"/><path d="M1 0.5h2.2v9H1z" fill="#f2be48"/></svg><span class="fn">proc</span><span class="fs">-</span><span class="fd">2025-06-11<br>13:59:23</span></div>
<div class="fr" style="top:342.40px"><span class="cb"></span><svg class="fi" viewBox="0 0 10 12"><path d="M1 0.5h7.5v10.5l-2-1.6H1z" fill="#fad56e"/><path d="M1 0.5h2.2v9H1z" fill="#f2be48"/></svg><span class="fn">run</span><span class="fs">1.0 KB</span><span class="fd">2025-09-16<br>15:11:44</span></div>
<div class="fr" style="top:365.60px"><span class="cb"></span><svg class="fi" viewBox="0 0 10 12"><path d="M1 0.5h7.5v10.5l-2-1.6H1z" fill="#fad56e"/><path d="M1 0.5h2.2v9H1z" fill="#f2be48"/></svg><span class="fn">srv</span><span class="fs">4.0 KB</span><span class="fd">2018-04-11<br>12:59:55</span></div>
<div class="fr" style="top:388.80px"><span class="cb"></span><svg class="fi" viewBox="0 0 10 12"><path d="M1 0.5h7.5v10.5l-2-1.6H1z" fill="#fad56e"/><path d="M1 0.5h2.2v9H1z" fill="#f2be48"/></svg><span class="fn">sys</span><span class="fs">-</span><span class="fd">2025-06-11<br>13:59:29</span></div>
<div class="fr" style="top:412.00px"><span class="cb"></span><svg class="fi" viewBox="0 0 10 12"><path d="M1 0.5h7.5v10.5l-2-1.6H1z" fill="#fad56e"/><path d="M1 0.5h2.2v9H1z" fill="#f2be48"/></svg><span class="fn">tmp</span><span class="fs">4.0 KB</span><span class="fd">2025-09-17<br>17:03:13</span></div>
<div class="fr" style="top:435.20px"><span class="cb"></span><svg class="fi" viewBox="0 0 10 12"><path d="M1 0.5h7.5v10.5l-2-1.6H1z" fill="#fad56e"/><path d="M1 0.5h2.2v9H1z" fill="#f2be48"/></svg><span class="fn">usr</span><span class="fs">4.0 KB</span><span class="fd">2025-09-09<br>10:21:07</span></div>
  </div>
</div>

<!-- watermark -->
<div id="wm"><svg viewBox="0 0 41.3 32" style="position:absolute;left:752.7px;top:5px;width:41.3px;height:32px"><path d="M14.400 0C6.400 0 0 5.400 0 12.200c0 3.800 2 7.100 5.300 9.400L4 26l5-2.600c1.700.5 3.500.8 5.400.8.500 0 1 0 1.500-.1-.3-1-.500-2-.500-3.100 0-6.300 6-11.300 13.300-11.300.400 0 .9 0 1.300.1C28.800 4.300 22.200 0 14.400 0z" fill="rgba(10,15,25,.5)"/><circle cx="9.600" cy="8.600" r="1.700" fill="rgba(255,255,255,.13)"/><circle cx="19.600" cy="8.600" r="1.700" fill="rgba(255,255,255,.13)"/><path d="M41.300 21c0-5.400-5.200-9.800-11.600-9.800S18 15.600 18 21s5.200 9.800 11.700 9.800c1.400 0 2.700-.2 3.900-.6l3.800 2-1-3.300c3-1.800 4.900-4.700 4.900-7.900z" fill="rgba(10,15,25,.5)"/></svg><span style="left:803.800px">公众号</span><span style="left:897.500px;font-size:21px;top:1.500px">·</span><span style="left:925.700px">院长技术</span></div>

</div>
</body>
</html>
